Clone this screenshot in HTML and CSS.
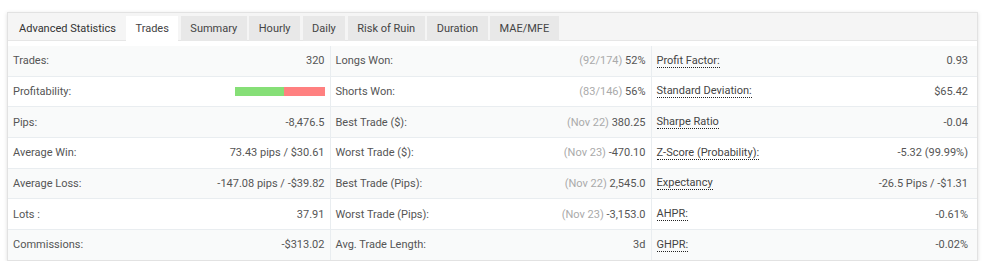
FILE: index.html
```html
<!DOCTYPE html>
<html lang="en">
<head>
<meta charset="utf-8">
<title>Advanced Statistics</title>
<link rel="stylesheet" href="styles.css">
</head>
<body>
<div class="prev-shadow"></div>
<section class="panel">
  <nav class="tabbar">
    <span class="title">Advanced Statistics</span>
    <span class="tab active">Trades</span>
    <span class="tab">Summary</span>
    <span class="tab">Hourly</span>
    <span class="tab">Daily</span>
    <span class="tab">Risk of Ruin</span>
    <span class="tab">Duration</span>
    <span class="tab">MAE/MFE</span>
  </nav>
  <table class="stats">
    <colgroup>
      <col class="c1"><col class="c2"><col class="c3">
    </colgroup>
    <tbody>
      <tr>
        <td><div class="cell"><span>Trades:</span><span class="val">320</span></div></td>
        <td><div class="cell"><span>Longs Won:</span><span class="val"><span class="muted">(92/174)</span> 52%</span></div></td>
        <td><div class="cell"><span class="abbr">Profit Factor:</span><span class="val">0.93</span></div></td>
      </tr>
      <tr>
        <td><div class="cell"><span>Profitability:</span><span class="bar"><span class="win" style="width:54.7%"></span><span class="loss"></span></span></div></td>
        <td><div class="cell"><span>Shorts Won:</span><span class="val"><span class="muted">(83/146)</span> 56%</span></div></td>
        <td><div class="cell"><span class="abbr">Standard Deviation:</span><span class="val">$65.42</span></div></td>
      </tr>
      <tr>
        <td><div class="cell"><span>Pips:</span><span class="val">-8,476.5</span></div></td>
        <td><div class="cell"><span>Best Trade ($):</span><span class="val"><span class="muted">(Nov 22)</span> 380.25</span></div></td>
        <td><div class="cell"><span class="abbr">Sharpe Ratio</span><span class="val">-0.04</span></div></td>
      </tr>
      <tr>
        <td><div class="cell"><span>Average Win:</span><span class="val">73.43 pips / $30.61</span></div></td>
        <td><div class="cell"><span>Worst Trade ($):</span><span class="val"><span class="muted">(Nov 23)</span> -470.10</span></div></td>
        <td><div class="cell"><span class="abbr">Z-Score (Probability):</span><span class="val">-5.32 (99.99%)</span></div></td>
      </tr>
      <tr>
        <td><div class="cell"><span>Average Loss:</span><span class="val">-147.08 pips / -$39.82</span></div></td>
        <td><div class="cell"><span>Best Trade (Pips):</span><span class="val"><span class="muted">(Nov 22)</span> 2,545.0</span></div></td>
        <td><div class="cell"><span class="abbr">Expectancy</span><span class="val">-26.5 Pips / -$1.31</span></div></td>
      </tr>
      <tr>
        <td><div class="cell"><span>Lots :</span><span class="val">37.91</span></div></td>
        <td><div class="cell"><span>Worst Trade (Pips):</span><span class="val"><span class="muted">(Nov 23)</span> -3,153.0</span></div></td>
        <td><div class="cell"><span class="abbr">AHPR:</span><span class="val">-0.61%</span></div></td>
      </tr>
      <tr>
        <td><div class="cell"><span>Commissions:</span><span class="val">-$313.02</span></div></td>
        <td><div class="cell"><span>Avg. Trade Length:</span><span class="val">3d</span></div></td>
        <td><div class="cell"><span class="abbr">GHPR:</span><span class="val">-0.02%</span></div></td>
      </tr>
    </tbody>
  </table>
</section>
</body>
</html>
```

FILE: styles.css
```css
html, body {
  margin: 0;
  padding: 0;
  background: #ffffff;
}

body {
  font-family: Roboto, "Liberation Sans", Arial, sans-serif;
  font-size: 11px;
  color: #555555;
}

.prev-shadow {
  height: 0;
  margin: 0 14px;
  box-shadow: 0 1px 4px rgba(0, 0, 0, 0.10);
}

.panel {
  margin: 12px 10px 0 7px;
  border: 1px solid #e2e2e2;
  background: #ffffff;
  box-shadow: 0 1px 4px rgba(0, 0, 0, 0.13);
}

.tabbar {
  display: flex;
  align-items: flex-end;
  height: 27px;
  background: #f5f5f5;
  border-bottom: 1px solid #e6e6e6;
}

.title {
  display: flex;
  align-items: center;
  height: 24px;
  padding: 0 10px 0 11px;
  color: #333333;
}

.tab {
  display: flex;
  align-items: center;
  height: 25px;
  padding: 0 9.5px;
  margin-right: 2.5px;
  margin-bottom: -1px;
  background: #e8e8e8;
  color: #444444;
}

.tab.active {
  background: #ffffff;
}

.stats {
  width: 100%;
  margin-top: 5px;
  border-collapse: collapse;
  table-layout: fixed;
}

.c1 { width: 322px; }
.c2 { width: 321px; }
.c3 { width: auto; }

.stats td {
  padding: 0;
  border-bottom: 1px solid #e9edf0;
  border-right: 1px solid #e9edf0;
  vertical-align: middle;
}

.stats td:last-child {
  border-right: none;
}

.stats tr:last-child td {
  border-bottom: none;
}

.stats tr:nth-child(odd) td {
  background: #f9fafa;
}

.cell {
  display: flex;
  justify-content: space-between;
  align-items: center;
  height: 29.67px;
  padding: 0 5px 0 5px;
  white-space: nowrap;
}

.stats td:last-child .cell {
  padding-right: 9px;
}

.val {
  color: #555555;
}

.muted {
  color: #aaaaaa;
}

.abbr {
  color: #444444;
  border-bottom: 1px dotted #222222;
  line-height: 12px;
  padding-top: 1px;
}

.bar {
  display: flex;
  width: 90px;
  height: 9px;
  margin-top: 1px;
}

.win {
  background: #86df77;
}

.loss {
  flex: 1;
  background: #ff8080;
}
```
